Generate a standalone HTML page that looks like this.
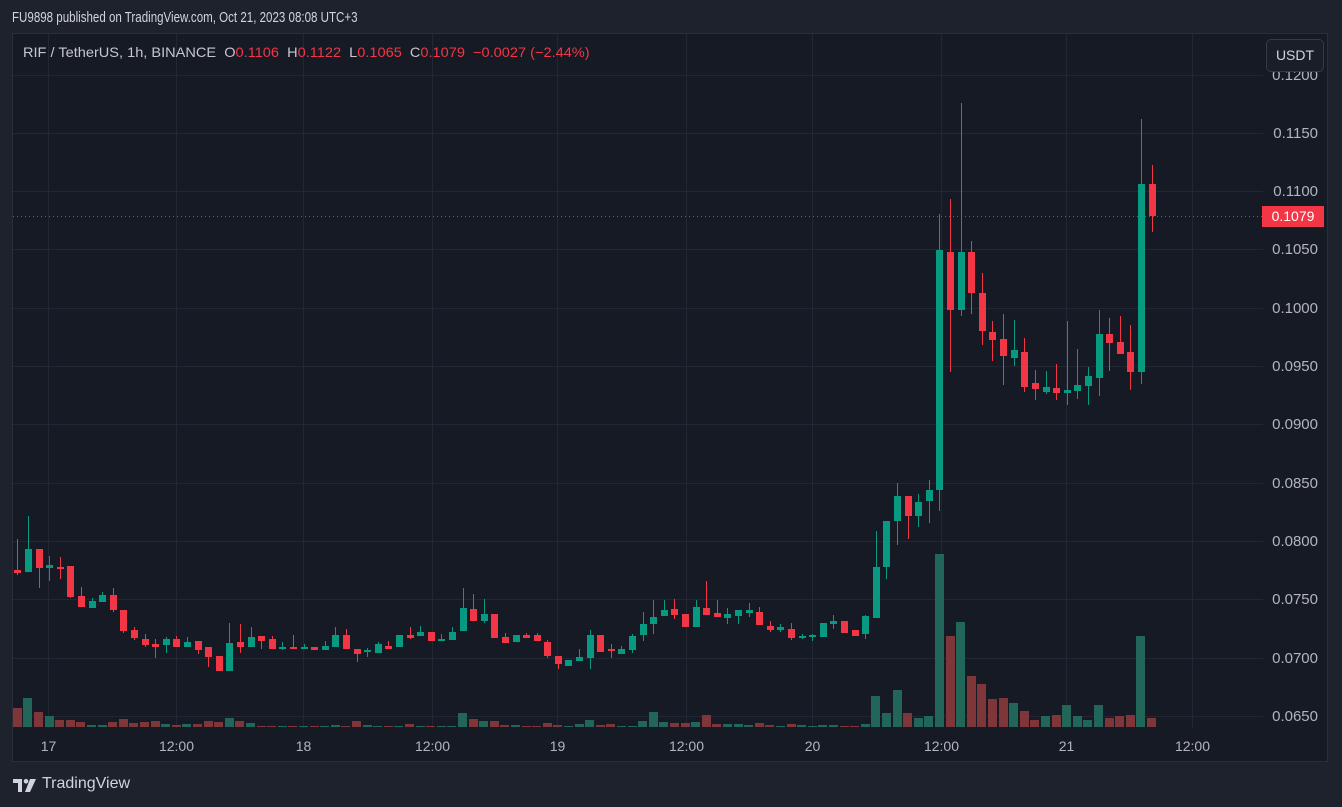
<!DOCTYPE html>
<html><head><meta charset="utf-8"><style>
html,body{margin:0;padding:0;background:#1e222d;width:1342px;height:807px;overflow:hidden;font-family:"Liberation Sans",sans-serif}
#hdr{position:absolute;left:12px;top:9px;font-size:15px;color:#d1d4dc;white-space:nowrap;transform:scaleX(0.77);transform-origin:0 0}
#pane{position:absolute;left:12px;top:33px;width:1316px;height:729px;background:#161a25;border:1px solid #2a2e39;box-sizing:border-box}
svg{position:absolute;left:0;top:0}
#leg{position:absolute;left:23px;top:44px;font-size:14px;color:#c4c7cf;white-space:pre;transform:scaleX(1.04);transform-origin:0 0}
#leg span{color:#f23645}
#usdt{position:absolute;left:1266px;top:39px;width:58px;height:33px;box-sizing:border-box;border:1px solid #363a45;border-radius:5px;background:#1a1e29;color:#d1d4dc;font-size:14px;text-align:center;line-height:31px}
#pl{position:absolute;left:1262px;top:206px;width:62px;height:21px;background:#f23645;color:#fff;font-size:14px;line-height:21px;text-align:center}
#logo{position:absolute;left:13px;top:776px;color:#d1d4dc;font-size:16px}
</style></head><body>
<div id="hdr">FU9898 published on TradingView.com, Oct 21, 2023 08:08 UTC+3</div>
<div id="pane"></div>
<svg id="s" width="1342" height="807"></svg>
<div id="leg">RIF / TetherUS, 1h, BINANCE  O<span>0.1106</span>  H<span>0.1122</span>  L<span>0.1065</span>  C<span>0.1079  −0.0027 (−2.44%)</span></div>
<div id="usdt">USDT</div>
<div id="pl">0.1079</div>
<div id="logo"><svg width="24" height="14" viewBox="0 0 24 14" style="position:absolute;left:0;top:3px"><path d="M0 0h9v13H5V4H0z" fill="#d1d4dc"/><circle cx="13" cy="2.3" r="2.3" fill="#d1d4dc"/><path d="M17 0h6l-6 13h-5z" fill="#d1d4dc"/></svg><span style="position:absolute;left:29px;top:-1px;white-space:nowrap">TradingView</span></div>
<script>
var C=[
[570,539,575,573],[572,516,572,549],[549,549,588,568],[568,556,581,565],[567,557,579,567],[566,566,598,597],[596,587,607,607],[608,598,608,601],[602,592,602,595],[595,588,612,610],
[610,610,633,631],[630,627,640,638],[639,634,647,645],[644,639,658,647],[645,637,653,639],[639,636,647,647],[647,637,647,642],[641,641,654,650],[647,647,667,657],[656,656,671,671],
[671,623,671,643],[642,624,653,647],[647,627,647,637],[636,636,649,641],[639,636,649,649],[647,642,650,647],[647,635,647,647],[649,644,649,647],[647,647,650,650],[650,641,650,646],
[647,627,647,635],[635,629,649,649],[649,649,662,654],[652,648,657,650],[653,642,653,644],[646,641,649,649],[647,635,647,635],[635,627,639,638],[636,626,636,632],[632,632,641,641],
[641,634,641,639],[640,627,640,632],[631,588,631,608],[609,594,621,621],[621,599,623,614],[614,614,638,638],[637,633,643,643],[642,635,642,635],[635,633,638,638],[635,633,641,641],
[642,640,658,656],[656,656,669,664],[666,660,666,660],[661,649,661,657],[658,630,669,635],[635,635,652,652],[649,644,658,650],[654,646,654,649],[650,634,653,636],[635,612,641,624],
[624,600,634,617],[616,600,616,610],[609,599,619,615],[614,614,627,627],[627,600,627,607],[608,581,615,615],[613,600,617,617],[618,608,624,614],[616,610,624,610],[613,603,617,610],
[612,607,625,625],[626,621,632,630],[630,624,632,627],[629,623,640,638],[637,634,639,636],[636,634,641,635],[637,623,637,623],[624,615,629,621],[621,621,633,633],[630,630,636,636],
[634,615,639,616],[618,531,618,567],[567,521,579,521],[521,483,545,496],[496,496,539,516],[516,494,527,502],[501,480,523,490],[490,214,511,250],[252,199,372,310],[310,103,316,252],
[252,241,314,293],[293,273,345,331],[332,321,361,340],[339,314,385,356],[358,320,366,350],[352,338,392,387],[383,370,400,389],[392,371,394,387],[388,364,400,393],[393,321,405,390],
[391,349,399,385],[386,367,405,376],[378,310,396,334],[334,318,371,343],[342,316,354,354],[352,325,390,372],[372,119,384,184],[184,165,232,216]];
var V=[708,698,712,716,720,720,722,725,725,722,719,723,722,721,724,725,724,724,721,722,718,721,723,726,726,726,726,726,726,726,725,726,721,725,726,726,726,724,726,726,
726,726,713,719,721,721,725,725,726,726,723,725,726,724,720,725,724,726,726,721,712,722,723,723,722,715,724,724,724,725,723,725,726,724,725,726,725,725,726,726,
724,696,713,690,713,718,716,554,636,622,676,684,699,698,703,711,720,716,715,705,716,720,705,718,716,715,636,718];
var h='';
var gl='#232733';
[75,133,191,249,308,366,424,483,541,599,658,716].forEach(function(y){h+='<line x1="13" x2="1263" y1="'+(y+.5)+'" y2="'+(y+.5)+'" stroke="'+gl+'"/>';});
[48,176,303,432,557,686,812,941,1066,1192].forEach(function(x){h+='<line x1="'+(x+.5)+'" x2="'+(x+.5)+'" y1="34" y2="728" stroke="'+gl+'"/>';});
var base=727;
for(var i=0;i<C.length;i++){var x=17.3+i*10.6,c=C[i],up=c[3]<c[0]||(c[3]==c[0]&&i%2==1);
var vc=up?'#22665a':'#7e3639';
var vx=Math.round(x-4.5);h+='<rect x="'+vx+'" y="'+V[i]+'" width="9" height="'+(base-V[i])+'" fill="'+vc+'"/>';}
h+='<line x1="13" x2="1262" y1="216.5" y2="216.5" stroke="#f23645" stroke-dasharray="1,3" opacity="0.9"/>';
for(var i=0;i<C.length;i++){var x=17.3+i*10.6,c=C[i],up=c[3]<c[0]||(c[3]==c[0]&&i%2==1);
var col=up?'#089981':'#f23645';var t=Math.min(c[0],c[3]),b=Math.max(c[0],c[3]);if(b-t<2)b=t+2;
var cx=Math.round(x)+0.5;
h+='<line x1="'+cx+'" x2="'+cx+'" y1="'+c[1]+'" y2="'+c[2]+'" stroke="'+col+'"/>';
h+='<rect x="'+(Math.round(x)-3)+'" y="'+t+'" width="7" height="'+(b-t)+'" fill="'+col+'"/>';}
var pl=[[75,'0.1200'],[133,'0.1150'],[191,'0.1100'],[249,'0.1050'],[308,'0.1000'],[366,'0.0950'],[424,'0.0900'],[483,'0.0850'],[541,'0.0800'],[599,'0.0750'],[658,'0.0700'],[716,'0.0650']];
pl.forEach(function(p){h+='<text x="1318" y="'+(p[0]+5)+'" text-anchor="end" font-size="15" fill="#b2b5be" font-family="Liberation Sans">'+p[1]+'</text>';});
[[48,'17'],[176,'12:00'],[303,'18'],[432,'12:00'],[557,'19'],[686,'12:00'],[812,'20'],[941,'12:00'],[1066,'21'],[1192,'12:00']].forEach(function(p){h+='<text x="'+(p[0]+0.5)+'" y="751" text-anchor="middle" font-size="14" fill="#b2b5be" font-family="Liberation Sans">'+p[1]+'</text>';});
document.getElementById('s').innerHTML=h;
</script>
</body></html>
